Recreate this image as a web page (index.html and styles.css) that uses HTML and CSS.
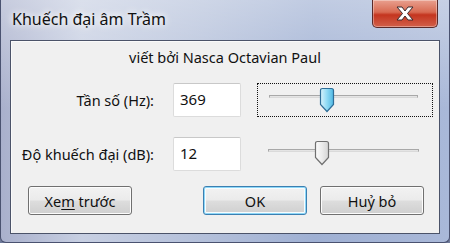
FILE: index.html
```html
<!DOCTYPE html>
<html lang="vi">
<head>
    <meta charset="UTF-8">
    <title>Khuếch đại âm Trầm</title>
    <link rel="stylesheet" href="styles.css">
</head>
<body>
    <div class="window">
        <!-- Title bar -->
        <div class="titlebar">
            <span class="title">Khuếch đại âm Trầm</span>
            <div class="close-btn">
                <svg width="22" height="15" viewBox="0 0 22 15">
                    <path d="M3 1 L8 1 L11 5 L14 1 L19 1 L13.5 7.5 L19 14 L14 14 L11 10 L8 14 L3 14 L8.5 7.5 Z"
                          fill="#ffffff" stroke="#3b2a2e" stroke-width="1" stroke-linejoin="round"/>
                </svg>
            </div>
        </div>

        <!-- Client area -->
        <div class="client">
            <p class="credit">viết bởi Nasca Octavian Paul</p>

            <div class="fields">
                <label class="field-label">Tần số (Hz):</label>
                <div class="textbox">369</div>
                <div class="slider focused">
                    <div class="track"></div>
                    <svg class="thumb" style="left: 61px" width="16" height="26" viewBox="0 0 16 26">
                        <defs>
                            <linearGradient id="blueThumb" x1="0" y1="0" x2="1" y2="0">
                                <stop offset="0" stop-color="#d9f3fc"/>
                                <stop offset="0.5" stop-color="#8fdaf4"/>
                                <stop offset="1" stop-color="#4fb8e3"/>
                            </linearGradient>
                        </defs>
                        <path d="M1.5 3.5 Q1.5 1.5 3.5 1.5 L12.5 1.5 Q14.5 1.5 14.5 3.5 L14.5 17.5 L8 24.5 L1.5 17.5 Z"
                              fill="url(#blueThumb)" stroke="#2f6e98" stroke-width="1.2"/>
                    </svg>
                </div>

                <label class="field-label">Độ khuếch đại (dB):</label>
                <div class="textbox">12</div>
                <div class="slider">
                    <div class="track"></div>
                    <svg class="thumb" style="left: 57px" width="16" height="26" viewBox="0 0 16 26">
                        <defs>
                            <linearGradient id="grayThumb" x1="0" y1="0" x2="1" y2="0">
                                <stop offset="0" stop-color="#fbfbfb"/>
                                <stop offset="0.5" stop-color="#ececec"/>
                                <stop offset="1" stop-color="#d4d4d4"/>
                            </linearGradient>
                        </defs>
                        <path d="M1.5 3.5 Q1.5 1.5 3.5 1.5 L12.5 1.5 Q14.5 1.5 14.5 3.5 L14.5 17.5 L8 24.5 L1.5 17.5 Z"
                              fill="url(#grayThumb)" stroke="#707070" stroke-width="1.2"/>
                    </svg>
                </div>
            </div>

            <div class="buttons">
                <button class="btn preview">Xe<u>m</u> trước</button>
                <button class="btn default">OK</button>
                <button class="btn">Huỷ bỏ</button>
            </div>
        </div>
    </div>
</body>
</html>
```

FILE: styles.css
```css
* {
    box-sizing: border-box;
    margin: 0;
    padding: 0;
}

body {
    width: 450px;
    height: 243px;
    overflow: hidden;
    font-family: "Noto Sans", "DejaVu Sans", sans-serif;
    background: #6f7a9a;
}

/* Window frame */
.window {
    height: 243px;
    display: flex;
    flex-direction: column;
    border: 1px solid #4a5270;
    border-top: none;
    border-radius: 0 0 6px 6px;
    background:
        linear-gradient(to bottom, rgba(255,255,255,0.35), rgba(255,255,255,0) 45%),
        linear-gradient(to right, #a9b0cc 0%, #c7cfe2 18%, #b4c0da 45%, #9fb0d3 70%, #a9b8d8 100%);
}

.titlebar {
    height: 40px;
    display: flex;
    justify-content: space-between;
    align-items: flex-start;
    padding-left: 11px;
}

.title {
    margin-top: 8px;
    font-size: 16px;
    color: #111;
    text-shadow: 0 0 6px #fff, 0 0 10px #fff;
}

.close-btn {
    width: 66px;
    height: 28px;
    margin-right: 11px;
    display: flex;
    align-items: center;
    justify-content: center;
    border: 1px solid #5a2a2a;
    border-top: none;
    border-radius: 0 0 5px 5px;
    background: linear-gradient(to bottom, #e9a08f 0%, #d86a52 45%, #c4351f 55%, #d2604a 100%);
    box-shadow: inset 0 0 0 1px rgba(255,255,255,0.35);
}

/* Client area */
.client {
    flex: 1;
    margin: 0 9px 8px 9px;
    border: 1px solid #4b5369;
    background: #f0f0f0;
    box-shadow: inset 1px 1px 0 #fafafa;
    font-size: 14.5px;
    color: #111;
}

.credit {
    text-align: center;
    line-height: 18px;
    padding-top: 7px;
}

/* Fields grid */
.fields {
    display: grid;
    grid-template-columns: 162px 84px 176px;
    grid-auto-rows: 34px;
    row-gap: 20px;
    margin-top: 17px;
}

.field-label {
    padding-right: 19px;
    text-align: right;
    align-self: center;
}

.textbox {
    width: 68px;
    padding: 5px 6px;
    background: #fff;
    border: 1px solid #dcdcdc;
    border-top-color: #c8c8c8;
    border-radius: 2px;
    font-size: 15px;
}

.slider {
    position: relative;
}

.slider.focused {
    border: 1px dotted #111;
}

.track {
    position: absolute;
    left: 11px;
    right: 14px;
    top: 11px;
    height: 3px;
    background: #e4e4e4;
    border: 1px solid #a8a8a8;
    border-bottom-color: #dadada;
}

.slider:not(.focused) .track {
    top: 12px;
}

.thumb {
    position: absolute;
    top: 3px;
}

/* Buttons */
.buttons {
    display: flex;
    gap: 13px;
    padding: 0 15px 0 17px;
    margin-top: 15px;
}

.btn {
    width: 104px;
    height: 29px;
    font-family: inherit;
    font-size: 14.5px;
    color: #111;
    border: 1px solid #707070;
    border-radius: 3px;
    background: linear-gradient(to bottom, #f2f2f2 0%, #ebebeb 48%, #dddddd 52%, #cfcfcf 100%);
    box-shadow: inset 0 0 0 1px #fcfcfc;
}

.btn.preview {
    margin-right: auto;
}

.btn.default {
    border-color: #3c7fb1;
    box-shadow: inset 0 0 0 1px #8ed8f8, inset 0 0 0 2px #f8fcfe;
}

.btn u {
    text-underline-offset: 2px;
}
```
